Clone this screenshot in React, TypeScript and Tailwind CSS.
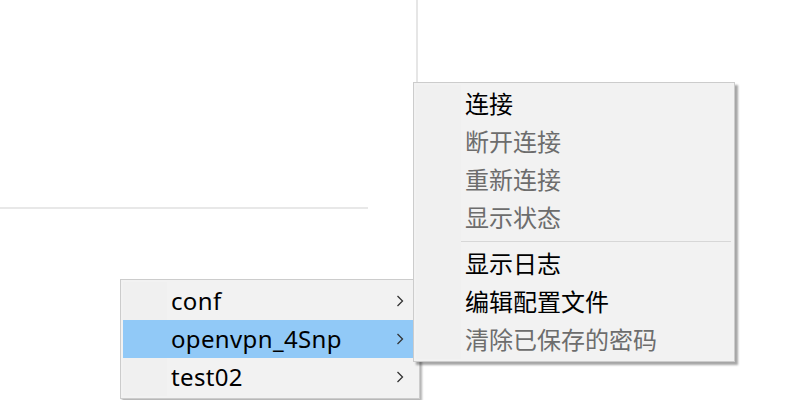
const font = { fontFamily: '"Noto Sans", "Noto Sans CJK SC", sans-serif' };

type Item = { label: string; disabled?: boolean } | "sep";

const actions: Item[] = [
  { label: "连接" },
  { label: "断开连接", disabled: true },
  { label: "重新连接", disabled: true },
  { label: "显示状态", disabled: true },
  "sep",
  { label: "显示日志" },
  { label: "编辑配置文件" },
  { label: "清除已保存的密码", disabled: true },
];

const configs = [
  { label: "conf" },
  { label: "openvpn_4Snp", active: true },
  { label: "test02" },
];

function Chevron() {
  return (
    <svg width="8" height="12" viewBox="0 0 8 12" className="shrink-0">
      <polyline points="1.5,1 6.5,6 1.5,11" fill="none" stroke="#333333" strokeWidth="1.3" />
    </svg>
  );
}

export default function App() {
  return (
    <div className="relative w-[804px] h-[400px] bg-white overflow-hidden" style={font}>
      {/* window background */}
      <div className="w-[418px] h-[207px] border-r-2 border-[#e6e6e6]" />
      <div className="w-[368px] h-[2px] bg-[#e8e8e8]" />

      {/* profiles menu */}
      <div className="absolute left-[120px] top-[279px] w-[300px] bg-[#f2f2f2] border border-[#cccccc] p-[2px] shadow-[2px_2px_2px_rgba(0,0,0,0.3)]">
        {configs.map((c) => (
          <div
            key={c.label}
            className={`flex items-center h-[38px] ${c.active ? "bg-[#91c9f7]" : ""}`}
          >
            <div className={`w-[44px] h-full ${c.active ? "" : "bg-[#f0f0f0]"}`} />
            <span className="flex-1 pl-[4px] text-[24px] leading-none tracking-[0.35px] text-black">{c.label}</span>
            <div className="pr-[13px] flex items-center">
              <Chevron />
            </div>
          </div>
        ))}
      </div>

      {/* actions submenu */}
      <div className="absolute left-[413px] top-[82px] w-[322px] bg-[#f2f2f2] border border-[#cccccc] p-[2px] shadow-[3px_3px_2px_rgba(0,0,0,0.35)]">
        {actions.map((a, i) =>
          a === "sep" ? (
            <div key={i} className="flex h-[8px] items-center">
              <div className="w-[45px] h-full bg-[#f0f0f0]" />
              <div className="flex-1 h-px bg-[#d7d7d7] mr-[1px]" />
            </div>
          ) : (
            <div key={i} className="flex items-center h-[38px]">
              <div className="w-[45px] h-full bg-[#f0f0f0]" />
              <span
                className={`pl-[4px] text-[24px] leading-none ${a.disabled ? "text-[#6d6d6d]" : "text-black"}`}
              >
                {a.label}
              </span>
            </div>
          )
        )}
      </div>
    </div>
  );
}
